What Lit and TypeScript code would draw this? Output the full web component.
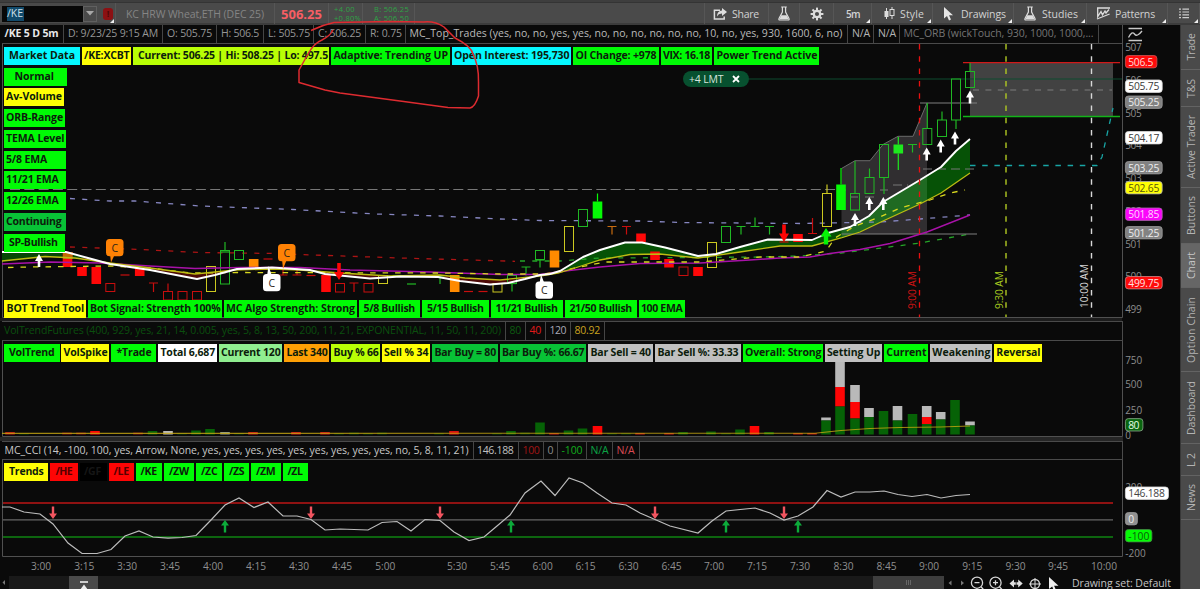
import { LitElement, html, svg, css, nothing } from "lit";
import { customElement, property } from "lit/decorators.js";

type Pt = [number, number];
// label, box start, text start, text end, background, optional text colour
type ChipDef = [string, number, number, number, string, string?];

const G = "#00fb05";
const Y = "#ffff05";
const LIME = "#b9ff05";
const CY = "#05f8ff";
const MG = "#08c236";
const GR = "#c0c0c0";

/** Single line of text whose tracking is adjusted to fill a given width. */
@customElement("fit-text")
class FitText extends LitElement {
  @property({ type: Number }) w = 0;
  @property() text = "";
  static styles = css`
    :host { display: inline-block; white-space: pre; flex: none; }
  `;
  updated() {
    const s = this.renderRoot.querySelector("span") as HTMLElement;
    s.style.letterSpacing = "0px";
    const natural = s.getBoundingClientRect().width;
    if (this.w && natural) s.style.letterSpacing = `${(this.w - natural) / this.text.length}px`;
    if (this.w) this.style.width = `${this.w}px`;
  }
  render() {
    return html`<span>${this.text}</span>`;
  }
}

@customElement("chip-row")
class ChipRow extends LitElement {
  @property({ attribute: false }) chips: ChipDef[] = [];
  @property({ type: Number }) end = 0;
  static styles = css`
    :host { display: flex; gap: 1.8px; padding-left: 4px; }
    .chip { box-sizing: border-box; height: 18px; line-height: 17px; flex: none; font-size: 10.5px; font-weight: 700; color: #102010; white-space: pre; }
  `;
  render() {
    return this.chips.map((c, i) => {
      const next = i + 1 < this.chips.length ? this.chips[i + 1][1] - 1.8 : this.end;
      return html`<div class="chip" style="width:${next - c[1]}px;padding-left:${c[2] - c[1]}px;background:${c[4]};color:${c[5] ?? "#0c1c0c"}"><fit-text .text=${c[0]} .w=${c[3] - c[2]}></fit-text></div>`;
    });
  }
}

const topChips: ChipDef[] = [
  ["Market Data", 4, 9, 75, CY], ["/KE:XCBT", 82, 84, 129.5, Y],
  ["Current: 506.25 | Hi: 508.25 | Lo: 497.5", 133, 138, 328, LIME],
  ["Adaptive: Trending UP", 331.3, 333.5, 448, G], ["Open Interest: 195,730", 452, 454, 569.5, CY],
  ["OI Change: +978", 573, 575.5, 656.5, G], ["VIX: 16.18", 661, 663, 710, G], ["Power Trend Active", 714, 716.5, 817.5, G],
];
const sideChips: [string, number, number, number, string][] = [
  ["Normal", 67, 14.5, 54, G], ["Av-Volume", 64, 6, 62, Y], ["ORB-Range", 65, 6, 63, G], ["TEMA Level", 66, 6, 64.5, G],
  ["5/8 EMA", 66, 6, 47, G], ["11/21 EMA", 66, 6, 58.5, G], ["12/26 EMA", 66, 6, 58.5, G], ["Continuing", 66, 6, 61.5, MG], ["SP-Bullish", 65, 9, 57.5, G],
];
const botChips: ChipDef[] = [
  ["BOT Trend Tool", 4, 6.5, 84, Y], ["Bot Signal: Strength 100%", 88, 90, 220.5, G], ["MC Algo Strength: Strong", 224, 226, 355, G],
  ["5/8 Bullish", 359, 363.5, 415, G], ["5/15 Bullish", 422, 427, 483.5, G], ["11/21 Bullish", 491, 495.5, 557.5, G],
  ["21/50 Bullish", 565, 569.5, 632, G], ["100 EMA", 639, 641, 682.5, G],
];
const volChips: ChipDef[] = [
  ["VolTrend", 4, 9, 54.5, G], ["VolSpike", 61.3, 63.5, 107.5, Y], ["*Trade", 111.3, 116.5, 151.5, G], ["Total 6,687", 158, 160.5, 215, "#ffffff"],
  ["Current 120", 218.8, 221, 280.5, "#90ee90"], ["Last 340", 284, 286.5, 327.5, "#ffa005"], ["Buy % 66", 331.3, 333.5, 378.5, LIME],
  ["Sell % 34", 382, 384, 428.5, Y], ["Bar Buy = 80", 432, 434.5, 496, MG], ["Bar Buy %: 66.67", 499.8, 502, 584.5, MG],
  ["Bar Sell = 40", 588.2, 590.5, 651, GR], ["Bar Sell %: 33.33", 655, 657.5, 738.5, GR], ["Overall: Strong", 742.7, 745, 821.5, G],
  ["Setting Up", 825.2, 827, 880.5, GR], ["Current", 884.3, 886.5, 926.5, G], ["Weakening", 930.2, 932.5, 990.5, GR], ["Reversal", 994.3, 996.5, 1040.5, Y],
];
const cciChips: ChipDef[] = [
  ["Trends", 4, 9, 43.5, Y], ["/HE", 50.2, 55.5, 72, "#fe0505", "#500"], ["/GF", 79.8, 84, 101, "#000", "#161616"], ["/LE", 108.6, 113.5, 129, "#fe0505", "#500"],
  ["/KE", 135.8, 140.5, 157, G], ["/ZW", 164, 169, 189, G], ["/ZC", 196, 201, 217.5, G], ["/ZS", 224, 229, 244.5, G], ["/ZM", 251.3, 256, 275.5, G], ["/ZL", 282.6, 287.5, 302.5, G],
];

const pts = (a: Pt[]) => a.map((p) => p.join(",")).join(" ");

const white: Pt[] = [[2,252],[66,252],[88,258],[110,264],[150,270],[197,279],[215,275],[237,269],[272,267.5],[310,270],[325,274],[340,275.5],[370,278.5],[400,276.5],[438,277],[460,281],[490,284.5],[508,283],[525,279],[540,275],[550,274],[560,271],[583,257],[600,250],[625,242.5],[642,242.5],[665,247.5],[698,256],[716,254],[740,247],[768,239.5],[812,240],[828,233],[850,227],[869,216],[883,202],[920,180],[941,167],[956,151],[970,139]];
const yellow: Pt[] = [[2,261],[45,256.5],[75,258],[110,263],[150,268],[195,274],[235,270],[272,269],[300,270],[340,273],[390,276],[440,275],[465,278],[500,280],[540,276],[558,273],[575,268],[600,260],[630,254.5],[660,254],[698,258],[740,252],[780,246],[812,246],[841,238],[860,232],[883,221],[920,204],[941,193],[970,173]];
const magenta: Pt[] = [[2,264],[50,262],[100,263],[150,266],[195,268.5],[240,267.5],[300,267.5],[350,270],[430,272],[500,274.5],[540,274.5],[565,271],[600,267],[640,263.5],[700,263],[750,260],[780,258],[810,257],[830,253.5],[860,249.5],[890,243.5],[927,232],[970,215]];
const yDash: Pt[] = [[8,267.5],[30,267],[110,266],[150,268],[190,273],[240,272.5],[440,273],[500,274],[545,274],[575,268],[605,262],[700,262],[760,257],[800,257],[826,251],[835,238],[855,226],[880,217],[900,208],[930,200],[950,193],[965,190]];
const blueDash: Pt[] = [[70,198.5],[110,201],[135,201],[200,206],[293,209.5],[375,214],[440,216],[500,219],[540,220.5],[640,221],[680,222.5],[800,223.5],[880,222],[920,219],[970,215]];
const redDash: Pt[] = [[70,247],[130,249],[200,252.5],[275,253.5],[300,254.5],[400,258],[515,261.3]];
const greenDash: Pt[] = [[520,261],[560,261],[600,258],[700,257.5],[760,257],[800,256],[841,253],[870,249.5],[920,243],[970,234]];
const zone: Pt[] = [[841.5,168.5],[855,160.7],[870,160.7],[883,144.5],[898,136.3],[913,136.3],[927,103],[927,234],[841.5,234]];

// x centre, body top, body bottom, colour, filled, high, low
type Candle = [number, number, number, string, boolean, number?, number?];
const R = "#fe0808", DR = "#c80e0e", GN = "#20b824", YL = "#ccc820", OR = "#ff8a00", BG = "#05fa05";
const candles: Candle[] = [
  [67.5,252,267,R,true],[82,267,276,R,true],[96.3,267,284,R,true],[110.3,283.5,291.5,DR,false],[139.7,268,276,R,true],
  [168,291.5,300,DR,false,283.5],[182.5,291.5,300,DR,false],[197,291.5,300,DR,false],[211,266.5,291.5,YL,false],[225,250.5,284,GN,false,242],
  [239,250.5,259.5,GN,false],[253.7,259,267.5,OR,true],[326,275,292,R,true],[340,283.5,292,DR,false],[368.5,283.5,292,DR,false],
  [383,275.5,283.5,YL,false],[454.7,275,292,OR,true],[497.5,283.5,292,YL,false],[512,275.5,283.5,GN,false,275.5,291.5],[540,250.5,259.5,GN,false,250.5,267.5],
  [554.5,250.5,267.5,OR,true],[569,226.5,251.5,YL,false],[583,209.5,226.5,GN,false],[597.5,201.5,218.5,BG,true,193.5],[641,233.5,242,R,true],
  [655,251.5,260,R,true],[669,259,267.5,R,true],[683.5,267,275.5,DR,false],[698,267,276,R,true],[712,242.5,267.5,YL,false],[726,226.5,242.5,GN,false],
  [798,234,242,R,true],[827,193.5,226.5,YL,false,184.5],[841,184.5,210,BG,true,168],[855,193.5,210,GN,false,161],[869.5,177.5,193.5,GN,false,168.5],
  [884,144.5,177.5,GN,false,144.5,194],[898.3,144.5,153.5,"#1ee81e",true,137,170],[927.3,128.5,144.5,GN,false,103],[942,120,136.5,GN,false,111.5],
  [956,79,120,GN,false,79,129],[970,71.5,87.5,GN,false,63],
];
// Doji bars: x, y, stem end y, colour
const dojis: [number, number, number, string][] = [
  [125,275,275,DR],[153.5,283,292,DR],[268,259,259,DR],[283,275,268,DR],[297,275,268,DR],[311,275.5,275.5,DR],[354,283,292,DR],[397,275.5,275.5,GN],[411.5,284,284,GN],
  [440,276,284,GN],[468.5,291.5,291.5,DR],[483,291.5,291.5,DR],[512,283.5,283.5,GN],[526,267,275.5,GN],[540,260,260,GN],[612,226.5,234.5,"#c96c10"],[626.5,226.5,234.5,DR],
  [741,226.5,234.5,GN],[755,226.5,217.5,GN],[769.5,226.5,234.5,GN],[784,242,242,DR],[812.5,233.5,218,DR],[912.5,144.5,152.5,GN],[225,252,252,GN],
];
const cci: Pt[] = [[2,507],[10,507],[24,512],[40,514],[53,524],[68,543],[82,553.5],[97,553.5],[111,549.5],[125,536],[139,531],[153,537],[168,538.2],[182,537.5],[196,535.5],[211,520],[225,505],[239,498],[254,507.5],[268,502],[283,516],[297,516],[311,519.5],[325,530],[340,529],[368,530],[382,522.5],[397,521.5],[411,531],[425,519.5],[440,520.5],[454,532],[469,540.5],[484,537],[497,526],[510,515],[525,493],[541,481],[555,495.5],[569,478],[583,483],[597,493],[612,503],[626,505],[640,513],[655,519.5],[670,526],[698,533],[712,521],[726,511],[755,508],[770,513],[784,520],[798,516],[813,507],[827,490.5],[841,497],[855,492],[870,492],[884,491],[898,494.5],[912,496.5],[927,494.5],[941,498],[956,495.5],[970,494.5]];

// x centre and stacked segments [top, colour] down to the baseline
const VG = "#066206", VR = "#fe0505", VW = "#b9b9b9";
const vol: [number, [number, string][]][] = [
  [10,[[432,"#b91414"]]],[24,[[433,"#073d07"]]],[67,[[432.5,"#7d0f0f"]]],[81,[[432.5,"#7d0f0f"]]],[95,[[431,VR]]],[138,[[432.5,"#7d0f0f"]]],[152.5,[[431,VG]]],[168,[[431,VW]]],
  [182,[[433,"#073d07"]]],[196,[[430.5,VG]]],[210,[[429,VG]]],[225,[[432,"#8c9c8c"]]],[239,[[433,"#073d07"]]],[253,[[432,"#c91414"]]],[296,[[432,"#c91414"]]],[325,[[432,"#c91414"]]],
  [339,[[433,"#073d07"]]],[354,[[432.5,"#073d07"]]],[368,[[433,"#073d07"]]],[382,[[432.5,"#073d07"]]],[439,[[433,"#073d07"]]],[454,[[431,"#d91010"]]],[497,[[433,"#073d07"]]],[511,[[431,VG]]],
  [525,[[432.5,"#073d07"]]],[540,[[422.5,VG]]],[554,[[433,"#b91414"]]],[568.5,[[430.5,VG]]],[582.5,[[428.5,VG]]],[597.5,[[426,VR]]],[612,[[433,"#073d07"]]],[626,[[433,"#073d07"]]],
  [640,[[433,"#b91414"]]],[669,[[433,"#b91414"]]],[683,[[432,VG]]],[711,[[431.5,VG]]],[726,[[433,"#073d07"]]],[740,[[429.5,VG]]],[754.5,[[426,VR]]],[769,[[432,VG]]],[798,[[433,"#b91414"]]],[812,[[433,"#b91414"]]],
  [826,[[417.5,VW],[420.5,VG]]],[840,[[361,VW],[387,VR],[406.5,VG]]],[855,[[385,VW],[402,VR],[418.5,VG]]],[869,[[408,VW],[417,VG]]],[883.5,[[411,VG]]],[897.5,[[406,VW],[420.5,VG]]],
  [912.5,[[414,VG]]],[926.7,[[406,VW],[417,VR],[424,VG]]],[940.7,[[412,VW],[419.5,VG]]],[955,[[400,VG]]],[970,[[421.5,VW],[425.5,VG]]],
];

const upArrow = (x: number, y: number, fill: string) =>
  svg`<path d="M${x} ${y}l4 7h-2.7v6h-2.6v-6h-2.7z" fill=${fill}/>`;
const smallArrow = (x: number, y: number, dir: number, fill: string) =>
  svg`<path d="M${x} ${y}l${4 * dir} ${-5.5 * dir}h${-2.8 * dir}v${-7 * dir}h${-2.4 * dir}v${7 * dir}h${-2.8 * dir}z" fill=${fill}/>`;
const bubble = (x: number, y: number, tip: Pt, fill: string, up: boolean) => svg`
  <path d="M${x + 4} ${up ? y + 2 : y + 15}L${tip[0]} ${tip[1]}L${x + 9} ${up ? y + 2 : y + 15}z" fill=${fill}/>
  <rect x=${x} y=${y} width="17.5" height="17.2" rx="3.5" fill=${fill}/>
  <text x=${x + 8.8} y=${y + 12.8} font-size="10.5" text-anchor="middle" fill="#2b2416">C</text>`;
const badge = (label: string, yc: number, w: number, fill: string, color: string, tw: number, border = "#ddd") => svg`
  <rect x="1125.4" y=${yc - 6} width=${w} height="12.4" rx="3" fill=${fill} stroke=${border} stroke-width=".8"/>
  <text x="1128.3" y=${yc + 4} font-size="10.3" fill=${color} textLength=${tw}>${label}</text>`;
const tick = (label: string, y: number, w: number) =>
  svg`<text x="1125.2" y=${y + 4} font-size="10" fill="#8d8d8d" textLength=${w}>${label}</text>`;

const flask = html`<svg width="12" height="15" viewBox="0 0 12 15"><path d="M3.2 1h5.6M4.4 1v5L1 12.6q-.5 1.4.8 1.4h8.4q1.3 0 .8-1.4L7.6 6V1" fill="none" stroke="#ddd" stroke-width="1.2"/><path d="M3.3 9.3h5.4l2 4H1.3z" fill="#ddd"/></svg>`;
const cursor = html`<svg width="11" height="14" viewBox="0 0 11 14"><path d="M1 0v11.5l3-2.6 2 4.6 2-.9-2-4.4h4z" fill="#e6e6e6"/></svg>`;
const corner = html`<svg class="corner" width="4" height="4" viewBox="0 0 4 4"><path d="M4 0v4H0z" fill="#eee"/></svg>`;

@customElement("app-root")
class AppRoot extends LitElement {
  static styles = css`
    :host { display: block; position: relative; width: 1200px; height: 589px; overflow: hidden; background: #0a0a0a; color: #a5a5a5; font-family: "Open Sans", "Noto Sans", sans-serif; font-size: 10.5px; }
    svg { display: block; flex: none; overflow: visible; }
    svg text { white-space: pre; }
    .toolbar { display: flex; box-sizing: border-box; height: 25px; padding-top: 3px; background: linear-gradient(#3e3e3e 0 2px, #343434 2px 3px, #4a4a4a 3px 23px, #3c3c3c 23px); color: #d2d2d2; }
    .item { box-sizing: border-box; position: relative; display: flex; align-items: center; height: 21px; border-right: 1px solid #565656; flex: none; }
    .corner { position: absolute; right: 1px; bottom: 1px; }
    .symbol { display: flex; margin-left: 2px; width: 95px; height: 16px; background: #080808; align-items: stretch; justify-content: space-between; }
    .sel { background: #114a6b; margin: 1px 0 1px 5px; line-height: 13px; width: 17px; color: #cfe0ea; }
    .drop { width: 14px; background: #4a4a4a; border: 1px solid #606060; box-sizing: border-box; display: flex; align-items: center; justify-content: center; }
    .alert { width: 10px; height: 12px; border-radius: 3px; background: #8c1013; margin-left: 6px; color: #4c0808; font-size: 9px; font-weight: 700; line-height: 12px; text-align: center; }
    .price { font-size: 13px; font-weight: 700; color: #f75e64; }
    .two { font-size: 7.5px; line-height: 8.6px; color: #2fa246; }
    .two fit-text { display: block; }
    .body { display: flex; height: 564px; }
    .main { width: 1180px; flex: none; display: flex; flex-direction: column; }
    .cells { display: flex; box-sizing: border-box; width: 1121px; margin-left: 2px; height: 19px; line-height: 17px; border-right: 1px solid #4a4a4a; border-bottom: 1px solid #4a4a4a; }
    .cell { box-sizing: border-box; height: 18px; border-right: 1px solid #454545; white-space: pre; flex: none; }
    .panel { display: grid; flex: none; }
    .panel > * { grid-area: 1 / 1; }
    .price-panel { height: 277px; }
    .vol-panel { height: 96px; }
    .cci-panel { height: 97px; }
    .overlay { display: flex; flex-direction: column; justify-content: space-between; }
    .side { display: flex; flex-direction: column; gap: 2.75px; padding: 2.6px 0 0 4px; }
    .schip { box-sizing: border-box; height: 18px; line-height: 17px; font-weight: 700; color: #0c1c0c; }
    .ptop { padding-top: 3px; }
    .pbot { padding-bottom: .5px; }
    .order { position: absolute; left: 683px; top: 71px; width: 66px; height: 16px; border-radius: 8px; background: #07502f; display: flex; align-items: center; color: #d6e4dc; padding-left: 6px; box-sizing: border-box; gap: 8px; }
    .band { height: 4px; width: 1123px; flex: none; background: #262626; }
    .axis { height: 19px; }
    .scroll { display: flex; height: 15px; flex: none; align-items: stretch; color: #d6d6d6; }
    .track { background: #191919; width: 864px; display: flex; margin-left: 9px; }
    .home { margin-left: 60px; width: 29px; background: #4a4a4a; display: flex; justify-content: center; }
    .thumb { width: 71px; height: 13px; background: #3e3e3e; display: flex; align-items: center; justify-content: center; }
    .tabs { width: 20px; box-sizing: border-box; background: #4a4a4a; border-left: 1px solid #383838; }
    .tab { box-sizing: border-box; display: flex; align-items: center; justify-content: center; border-bottom: 1px solid #636363; }
    .tab.on { background: #666; }
    .ink { position: absolute; inset: 0; pointer-events: none; }
  `;

  private cell(text: string, x0: number, x1: number, w: number, color = "#969696", pad = 4, bold = false) {
    return html`<div class="cell" style="width:${x1 - x0}px;padding-left:${pad}px;color:${color};font-weight:${bold ? 700 : 400}"><fit-text .text=${text} .w=${w}></fit-text></div>`;
  }

  private item(x0: number, x1: number, pad: number, content: unknown, tri = true) {
    return html`<div class="item" style="width:${x1 - x0}px;padding-left:${pad}px">${content}${tri ? corner : nothing}</div>`;
  }

  private toolbar() {
    return html`<div class="toolbar">
      ${this.item(0, 116, 0, html`<div class="symbol"><div class="sel"><fit-text .text=${"/KE"} .w=${16}></fit-text></div><div class="drop"><svg width="8" height="5" viewBox="0 0 8 5"><path d="M0 0h8L4 4.6z" fill="#a8a8a8"/></svg></div></div><div class="alert">!</div>`)}
      ${this.item(116, 275, 10, html`<fit-text style="color:#858585" .text=${"KC HRW Wheat,ETH (DEC 25)"} .w=${138}></fit-text>`, false)}
      ${this.item(275, 329, 6, html`<fit-text class="price" .text=${"506.25"} .w=${41}></fit-text>`, false)}
      ${this.item(329, 363, 5, html`<div class="two"><fit-text .text=${"+4.00"} .w=${21}></fit-text><fit-text .text=${"+0.80%"} .w=${27}></fit-text></div>`, false)}
      ${this.item(363, 415, 11, html`<div class="two"><fit-text .text=${"B: 506.25"} .w=${35}></fit-text><fit-text .text=${"A: 506.50"} .w=${35}></fit-text></div>`, false)}
      ${this.item(415, 705, 0, nothing, false)}
      ${this.item(705, 769, 8, html`<svg width="15" height="12" viewBox="0 0 15 12"><path d="M7 2.2H1.4v8.8h9.8V8.6" fill="none" stroke="#ddd" stroke-width="1.5"/><path d="M9 0l5 4-5 4V5.6Q5.5 5.4 4 8.4 4 3 9 2.5z" fill="#ddd"/></svg><fit-text style="margin-left:4px" .text=${"Share"} .w=${27}></fit-text>`, false)}
      ${this.item(769, 800, 9, flask, false)}
      ${this.item(800, 834, 10, html`<svg width="14" height="14" viewBox="-7 -7 14 14"><circle r="3.2" fill="none" stroke="#ddd" stroke-width="2.3"/>${[0, 45, 90, 135, 180, 225, 270, 315].map((a) => svg`<rect x="-1" y="-6.4" width="2" height="3" fill="#ddd" transform="rotate(${a})"/>`)}</svg>`, false)}
      ${this.item(834, 872, 12, html`<fit-text style="font-weight:600;font-size:10px" .text=${"5m"} .w=${14}></fit-text>`)}
      ${this.item(872, 933, 12, html`<svg width="11" height="13" viewBox="0 0 11 13"><path d="M2.5 1v11M8 0v12" stroke="#ddd"/><rect x=".5" y="4" width="4" height="6" fill="#ddd"/><rect x="6" y="2.5" width="4" height="6" fill="#4a4a4a" stroke="#ddd"/></svg><fit-text style="margin-left:5px" .text=${"Style"} .w=${24}></fit-text>`)}
      ${this.item(933, 1014, 10, html`${cursor}<fit-text style="margin-left:7px" .text=${"Drawings"} .w=${45}></fit-text>`)}
      ${this.item(1014, 1087, 10, html`${flask}<fit-text style="margin-left:6px" .text=${"Studies"} .w=${36}></fit-text>`)}
      ${this.item(1087, 1168, 10, html`<svg width="13" height="13" viewBox="0 0 13 13"><path d="M0 1h13M0 12L12.6 7" stroke="#ddd" stroke-width="1.3"/><path d="M.7 1v8.5L4 4.6l1.5 3.2L8 4l1 2 3-3.5" fill="none" stroke="#ddd" stroke-width="1.3"/></svg><fit-text style="margin-left:5px" .text=${"Patterns"} .w=${40}></fit-text>`)}
      ${this.item(1168, 1200, 11, html`<svg width="11" height="11" viewBox="0 0 11 11"><path d="M0 1.2h2M0 4h2M0 6.8h2M0 9.6h2M3.4 1.2H10M3.4 4H10M3.4 6.8H10M3.4 9.6H10" stroke="#ccc" stroke-width="1.2"/></svg>`)}
    </div>`;
  }

  private priceChart() {
    return html`<svg width="1180" height="277" viewBox="0 44 1180 277">
      <path d="M2.500 44V317.500H1122.500V25" fill="none" stroke="#505050"/>
      <rect x="0" y="318" width="1122" height="3" fill="#1c1c1c"/>
      <polygon points=${pts(zone)} fill="#302e30"/>
      <polyline points=${pts(zone.slice(0, 7))} fill="none" stroke="#6b6b6b"/>
      <rect x="970" y="63" width="143" height="53.5" fill="#424242"/>
      <polygon points=${pts([...white.filter((p) => p[0] <= 88), ...yellow.filter((p) => p[0] <= 75).reverse()])} fill="#064606"/>
      <polygon points=${pts([...white.filter((p) => p[0] >= 88 && p[0] <= 540), ...yellow.filter((p) => p[0] >= 75 && p[0] <= 540).reverse()])} fill="#4d0a08"/>
      <polygon points=${pts([...white.filter((p) => p[0] >= 540), ...yellow.filter((p) => p[0] >= 540).reverse()])} fill="#065206"/>
      <polygon points="841.5,231 850,227 869,216 883,202 920,180 927,175.7 927,200.5 920,204 883,221 860,232 841.5,238" fill="#1f6a22"/>
      <path d="M10 189.500H841" stroke="#777" stroke-dasharray="10 4.3"/>
      <polyline points=${pts(blueDash)} fill="none" stroke="#8686c0" stroke-width="1.3" stroke-dasharray="5 7.3"/>
      <polyline points=${pts(redDash)} fill="none" stroke="#ac1414" stroke-width="1.3" stroke-dasharray="5 7.3"/>
      <polyline points=${pts(greenDash)} fill="none" stroke="#25a528" stroke-width="1.3" stroke-dasharray="5 7.3"/>
      <path d="M748 79H1122" stroke="#0d4a2f" stroke-width="1.200"/>
      <path d="M920 103H977M841.5 234H977" stroke="#7e7e7e" stroke-width="1.200"/>
      <path d="M923 169H975M893 185H908M837 190H846M880 190H888M850 197H858M865 197H874" stroke="#777" stroke-dasharray="9 5"/>
      <path d="M973 90H1112" stroke="#7c7c7c" stroke-dasharray="6 6.4"/>
      <path d="M963 62.7H1120" stroke="#d01818" stroke-width="1.3"/>
      <path d="M963 116.5H1120" stroke="#13b319" stroke-width="1.3"/>
      ${candles.map(([x, t, b, c, f, h, l]) => svg`
        <rect x=${f ? x - 4.8 : x - 4.5} y=${t} width=${f ? 9.6 : 9} height=${b - t} fill=${f ? c : "none"} stroke=${f ? "none" : c}/>
        ${h !== undefined && h < t ? svg`<path d="M${x} ${h}V${t}" stroke=${c} stroke-width="1.2"/>` : nothing}
        ${l !== undefined ? svg`<path d="M${x} ${b}V${l}" stroke=${c} stroke-width="1.2"/>` : nothing}`)}
      ${dojis.map(([x, y, s, c]) => svg`<path d="M${x - 4.5} ${y}H${x + 4.5}M${x} ${y}V${s}" stroke=${c} stroke-width="1.2"/>`)}
      <rect x="63" y="252" width="9.6" height="7" fill="#c56a05"/>
      <polyline points=${pts(magenta)} fill="none" stroke="#a812a8" stroke-width="1.4"/>
      <polyline points=${pts(yDash)} fill="none" stroke="#d8d820" stroke-width="1.3" stroke-dasharray="5.5 7"/>
      <polyline points=${pts(yellow)} fill="none" stroke="#bcbc12" stroke-width="1.3"/>
      <polyline points=${pts(white)} fill="none" stroke="#fff" stroke-width="1.9" stroke-linejoin="round"/>
      <path d="M970 165.5H1097L1102 157L1113 108" fill="none" stroke="#18a5a5" stroke-width="1.3" stroke-dasharray="5.5 6.7"/>
      <path d="M919.5 44V317" stroke="#e81010" stroke-width="1.3" stroke-dasharray="5.5 6.8"/>
      <path d="M1006 44V317" stroke="#b0c822" stroke-width="1.4" stroke-dasharray="5.5 6.8"/>
      <path d="M1091.5 44V317" stroke="#d8d8d8" stroke-width="1.4" stroke-dasharray="5.5 6.8"/>
      <text transform="translate(915.5 309)rotate(-90)" font-size="10.3" fill="#d01414" textLength="38">9:00 AM</text>
      <text transform="translate(1002.5 309)rotate(-90)" font-size="10.3" fill="#a8cc20" textLength="38">9:30 AM</text>
      <text transform="translate(1088 308)rotate(-90)" font-size="10.3" fill="#d8d8d8" textLength="44">10:00 AM</text>
      ${([[39,254],[855,213],[869.3,197],[883.3,197],[926.7,147.5],[940.7,139.5],[955,131.5],[970,90.5]] as Pt[]).map(([x, y]) => upArrow(x, y, "#fff"))}
      <path d="M826 228l5.5 8.5h-3.3v8h-4.4v-8h-3.3z" fill="#05f505"/>
      <path d="M339 280l-5-8h3.2v-9h3.6v9h3.2zM784 242l-5-8.5h3.2v-9h3.6v9h3.2z" fill="#fe0505"/>
      ${bubble(106, 239, [111, 262.5], "#ff8205", false)}
      ${bubble(278, 244, [283, 269], "#ff8205", false)}
      ${bubble(263, 274, [268.5, 266], "#fff", true)}
      ${bubble(535.5, 281.5, [541, 274.5], "#fff", true)}
      ${[507, 506, 505, 504, 503, 502, 501, 500, 499].map((p, i) => tick(String(p), 47 + i * 32.75, 16.5))}
      ${badge("506.5", 61.5, 31.5, "#fe0b0b", "#ffd8d8", 25, "#c55")}
      ${badge("505.75", 86, 36.8, "#fff", "#3a3a3a", 31)}
      ${badge("505.25", 102, 36.8, "#828282", "#eee", 31, "#999")}
      ${badge("504.17", 137.5, 36.8, "#fff", "#3a3a3a", 31)}
      ${badge("503.25", 167.5, 36.8, "#828282", "#eee", 31, "#999")}
      ${badge("502.65", 187.5, 36.8, "#ffff05", "#55550a", 31, "#aaa")}
      ${badge("501.85", 214, 36.8, "#fb05fb", "#ffd8ff", 31, "#a6a")}
      ${badge("501.25", 232.5, 36.8, "#828282", "#eee", 31, "#999")}
      ${badge("499.75", 282.5, 36.8, "#fe0b0b", "#ffe0e0", 31, "#c88")}
    </svg>`;
  }

  private volChart() {
    return html`<svg width="1180" height="96" viewBox="0 341 1180 96">
      <path d="M2.5 341V436.5H1122.5V341" fill="none" stroke="#505050"/>
      ${vol.map(([x, segs]) => segs.map(([t, c], i) => svg`<rect x=${x - 4.8} y=${t} width="9.6" height=${(i + 1 < segs.length ? segs[i + 1][0] : 434.5) - t} fill=${c}/>`))}
      <polyline points="2,433.4 815,433.2 841,430.5 870,428.5 900,427.5 940,427 970,426" fill="none" stroke="#c8a812" stroke-opacity=".8" stroke-width="1.1"/>
      ${tick("750", 359.5, 17)}${tick("500", 384, 17)}${tick("250", 409.5, 17)}${tick("0", 434.5, 5.5)}
      ${badge("80", 424.6, 17.5, "#0a660f", "#e4ffe4", 11, "#8aa88a")}
    </svg>`;
  }

  private cciChart() {
    return html`<svg width="1180" height="97" viewBox="0 460 1180 97">
      <path d="M2.5 460V556.5H1122.5V460" fill="none" stroke="#505050"/>
      <path d="M3 503H1113" stroke="#8f1212" stroke-width="2"/>
      <path d="M3 519.8H1113" stroke="#666" stroke-width="1.2"/>
      <path d="M3 537H1113" stroke="#0f8512" stroke-width="1.6"/>
      <polyline points=${pts(cci)} fill="none" stroke="#bcbcbc" stroke-width="1.2"/>
      ${[53, 311, 440, 655, 784].map((x) => smallArrow(x, 519, 1, "#f25560"))}
      ${[225, 511, 726, 798].map((x) => smallArrow(x, 520, -1, "#0cab3a"))}
      ${tick("200", 486.5, 17)}${tick("-200", 553, 20.5)}
      ${badge("146.188", 493, 43, "#fff", "#444", 36.5)}
      ${badge("0", 518.5, 12, "#909090", "#eee", 6, "#999")}
      ${badge("-100", 535.5, 26.5, "#05fb05", "#0a5a0a", 21, "#484")}
    </svg>`;
  }

  render() {
    const times: [string, number][] = [["3:00",41],["3:15",84.3],["3:30",127],["3:45",170],["4:00",213],["4:15",256],["4:30",299],["4:45",342],["5:00",385.3],["5:30",457],["5:45",500],["6:00",542.7],["6:15",585.5],["6:30",628.5],["6:45",671.5],["7:00",714],["7:15",757],["7:30",800],["8:30",843.5],["8:45",886.5],["9:00",929],["9:15",972.3],["9:30",1015.5],["9:45",1058],["10:00",1104]];
    const tabs: [string, number, number, boolean?][] = [["Trade",45,27.5],["T&S",37,19],["Active Trader",81,64],["Buttons",56,39],["Chart",44,27,true],["Option Chain",84,66],["Dashboard",72,54],["L 2",32,14],["News",44,27]];
    return html`
      ${this.toolbar()}
      <div class="body">
        <div class="main">
          <div class="cells">
            ${this.cell("/KE 5 D 5m", 2, 64, 54, "#e8e8e8", 2.5, true)}
            ${this.cell("D: 9/23/25 9:15 AM", 64, 163, 90)}
            ${this.cell("O: 505.75", 163, 217, 45)}
            ${this.cell("H: 506.5", 217, 264, 38)}
            ${this.cell("L: 505.75", 264, 314, 42)}
            ${this.cell("C: 506.25", 314, 366, 43)}
            ${this.cell("R: 0.75", 366, 406, 32)}
            ${this.cell("MC_Top_Trades (yes, no, no, yes, yes, no, no, no, no, no, no, 10, no, yes, 930, 1600, 6, no)", 406, 848, 433, "#bababa", 3.5)}
            ${this.cell("N/A", 848, 874, 18, "#b4b4b4")}
            ${this.cell("N/A", 874, 900, 18, "#b4b4b4")}
            ${this.cell("MC_ORB (wickTouch, 930, 1000, 1000,...", 900, 1099, 190, "#747474", 3.5)}
          </div>
          <div class="panel price-panel">
            ${this.priceChart()}
            <div class="overlay" style="height:274px">
              <div>
                <chip-row class="ptop" .chips=${topChips} .end=${819.3}></chip-row>
                <div class="side">${sideChips.map((s) => html`<div class="schip" style="width:${s[1] - 4}px;padding-left:${s[2] - 4}px;background:${s[4]}"><fit-text .text=${s[0]} .w=${s[3] - s[2]}></fit-text></div>`)}</div>
              </div>
              <chip-row class="pbot" .chips=${botChips} .end=${685}></chip-row>
            </div>
          </div>
          <div class="cells" style="height:20px;border-top:1px solid #4a4a4a">
            ${this.cell("VolTrendFutures (400, 929, yes, 21, 14, 0.005, yes, 5, 8, 13, 50, 200, 11, 21, EXPONENTIAL, 11, 50, 11, 200)", 2, 506, 497, "#0b4e0e", 2)}
            ${this.cell("80", 506, 526, 11.5, "#0c5c10", 3.5)}
            ${this.cell("40", 526, 546, 11.5, "#e01a1a", 3.5)}
            ${this.cell("120", 546, 571, 16.5, "#a8a8b4", 3.5)}
            ${this.cell("80.92", 571, 605, 25.5, "#c9a21f", 3.5)}
          </div>
          <div class="panel vol-panel">
            ${this.volChart()}
            <chip-row style="padding-top:2.5px" .chips=${volChips} .end=${1042.3}></chip-row>
          </div>
          <div class="band"></div>
          <div class="cells" style="height:19px;border-top:1px solid #4a4a4a">
            ${this.cell("MC_CCI (14, -100, 100, yes, Arrow, None, yes, yes, yes, yes, yes, yes, yes, yes, yes, no, 5, 8, 11, 21)", 2, 474, 464, "#c8c8c8", 2.5)}
            ${this.cell("146.188", 474, 519, 36.5, "#c0c0c0", 3)}
            ${this.cell("100", 519, 544, 17, "#a01515", 3.5)}
            ${this.cell("0", 544, 558, 6, "#8d8d8d", 3.5)}
            ${this.cell("-100", 558, 587, 21, "#11ad1c", 3.5)}
            ${this.cell("N/A", 587, 613, 18, "#0ba345", 3.5)}
            ${this.cell("N/A", 613, 640, 18, "#d94c55", 3.5)}
          </div>
          <div class="panel cci-panel">
            ${this.cciChart()}
            <chip-row style="padding-top:3px" .chips=${cciChips} .end=${308}></chip-row>
          </div>
          <svg class="axis" width="1180" height="18" viewBox="0 557 1180 18">
            ${times.map(([t, x]) => svg`<text x=${x} y="569.6" font-size="10.2" text-anchor="middle" fill="#8f8f8f">${t}</text>`)}
          </svg>
          <div class="scroll">
            <svg width="9" height="14" viewBox="0 0 9 14" style="margin-right:-9px"><path d="M5 4v5L2.5 6.5z" fill="#777"/></svg>
            <div class="track"><div class="home"><svg width="12" height="14" viewBox="0 0 12 14"><path d="M2 6h8" stroke="#eee" stroke-width="1.6"/><path d="M6 8.5l4 5.5H2z" fill="#eee"/></svg></div></div>
            <div class="thumb"><svg width="6" height="5" viewBox="0 0 6 5"><path d="M.5 0v5M2.5 0v5M4.5 0v5" stroke="#666"/></svg></div>
            <svg width="128" height="15" viewBox="944 574 128 15">
              <path d="M951.5 578.5v5l-3-2.5zM961 578.5v5l3-2.5z" fill="#777"/>
              <g fill="none" stroke="#d8d8d8" stroke-width="1.3"><circle cx="977" cy="580.7" r="5.6"/><path d="M974.5 580.7h5M981 584.7l3.500 4"/><circle cx="995.5" cy="580.7" r="5.6"/><path d="M993 580.7h5M995.5 578.200v5M999.5 584.7l3.500 4"/><circle cx="1035" cy="582" r="4.5"/><path d="M1029 582h12M1035 576v12" stroke-width="1"/></g>
              <path d="M1009.5 581.500l4.5-4v2.8h4.2V577.500l4.5 4-4.5 4v-2.8H1014v2.8z" fill="#e0e0e0"/><path d="M1016.2 577.500v8" stroke="#222" stroke-width=".8"/>
              <path d="M1049 575v12l3.200-2.500 1.8 4.5 2-.9-1.9-4.300h4.400z" fill="#eee"/>
            </svg>
            <fit-text style="line-height:14px;color:#c4c4c4" .text=${"Drawing set: Default"} .w=${99}></fit-text>
          </div>
        </div>
        <div class="tabs">${tabs.map(([t, h, w, on]) => html`<div class="tab ${on ? "on" : ""}" style="height:${h}px"><svg width="12" height=${w} viewBox="0 0 12 ${w}"><text transform="translate(9.6 ${w})rotate(-90)" font-size="10.5" fill=${on ? "#c8c8c8" : "#b4b4b4"} textLength=${w}>${t}</text></svg></div>`)}</div>
      </div>
      <div class="order"><fit-text .text=${"+4 LMT"} .w=${34.5}></fit-text><svg width="8" height="8" viewBox="0 0 8 8"><path d="M1 1l6 6M7 1l-6 6" stroke="#fff" stroke-width="1.8"/></svg></div>
      <svg class="ink" width="1200" height="589" viewBox="0 0 1200 589">
        <g fill="none" stroke="#c9c9c9" stroke-width="1.3"><path d="M1128.5 28.5h13.5M1128.5 40.5h13.5M1128.5 37.500Q1132 30.500 1134.500 34T1142 31"/></g>
        <path d="M311 30.5Q322 25 334 22.5L390 21.5L424 22Q435 21 444 27L455 38Q471 46 473 54Q479 66 478.5 82V96Q475 107 470 108L448 107.5L400 101L340 93L325 90L299 82.5V70L308 54Q314 43 322 40Q330 36 333 30" fill="none" stroke="#de2b30" stroke-width="1.5" stroke-linejoin="round"/>
      </svg>
    `;
  }
}
